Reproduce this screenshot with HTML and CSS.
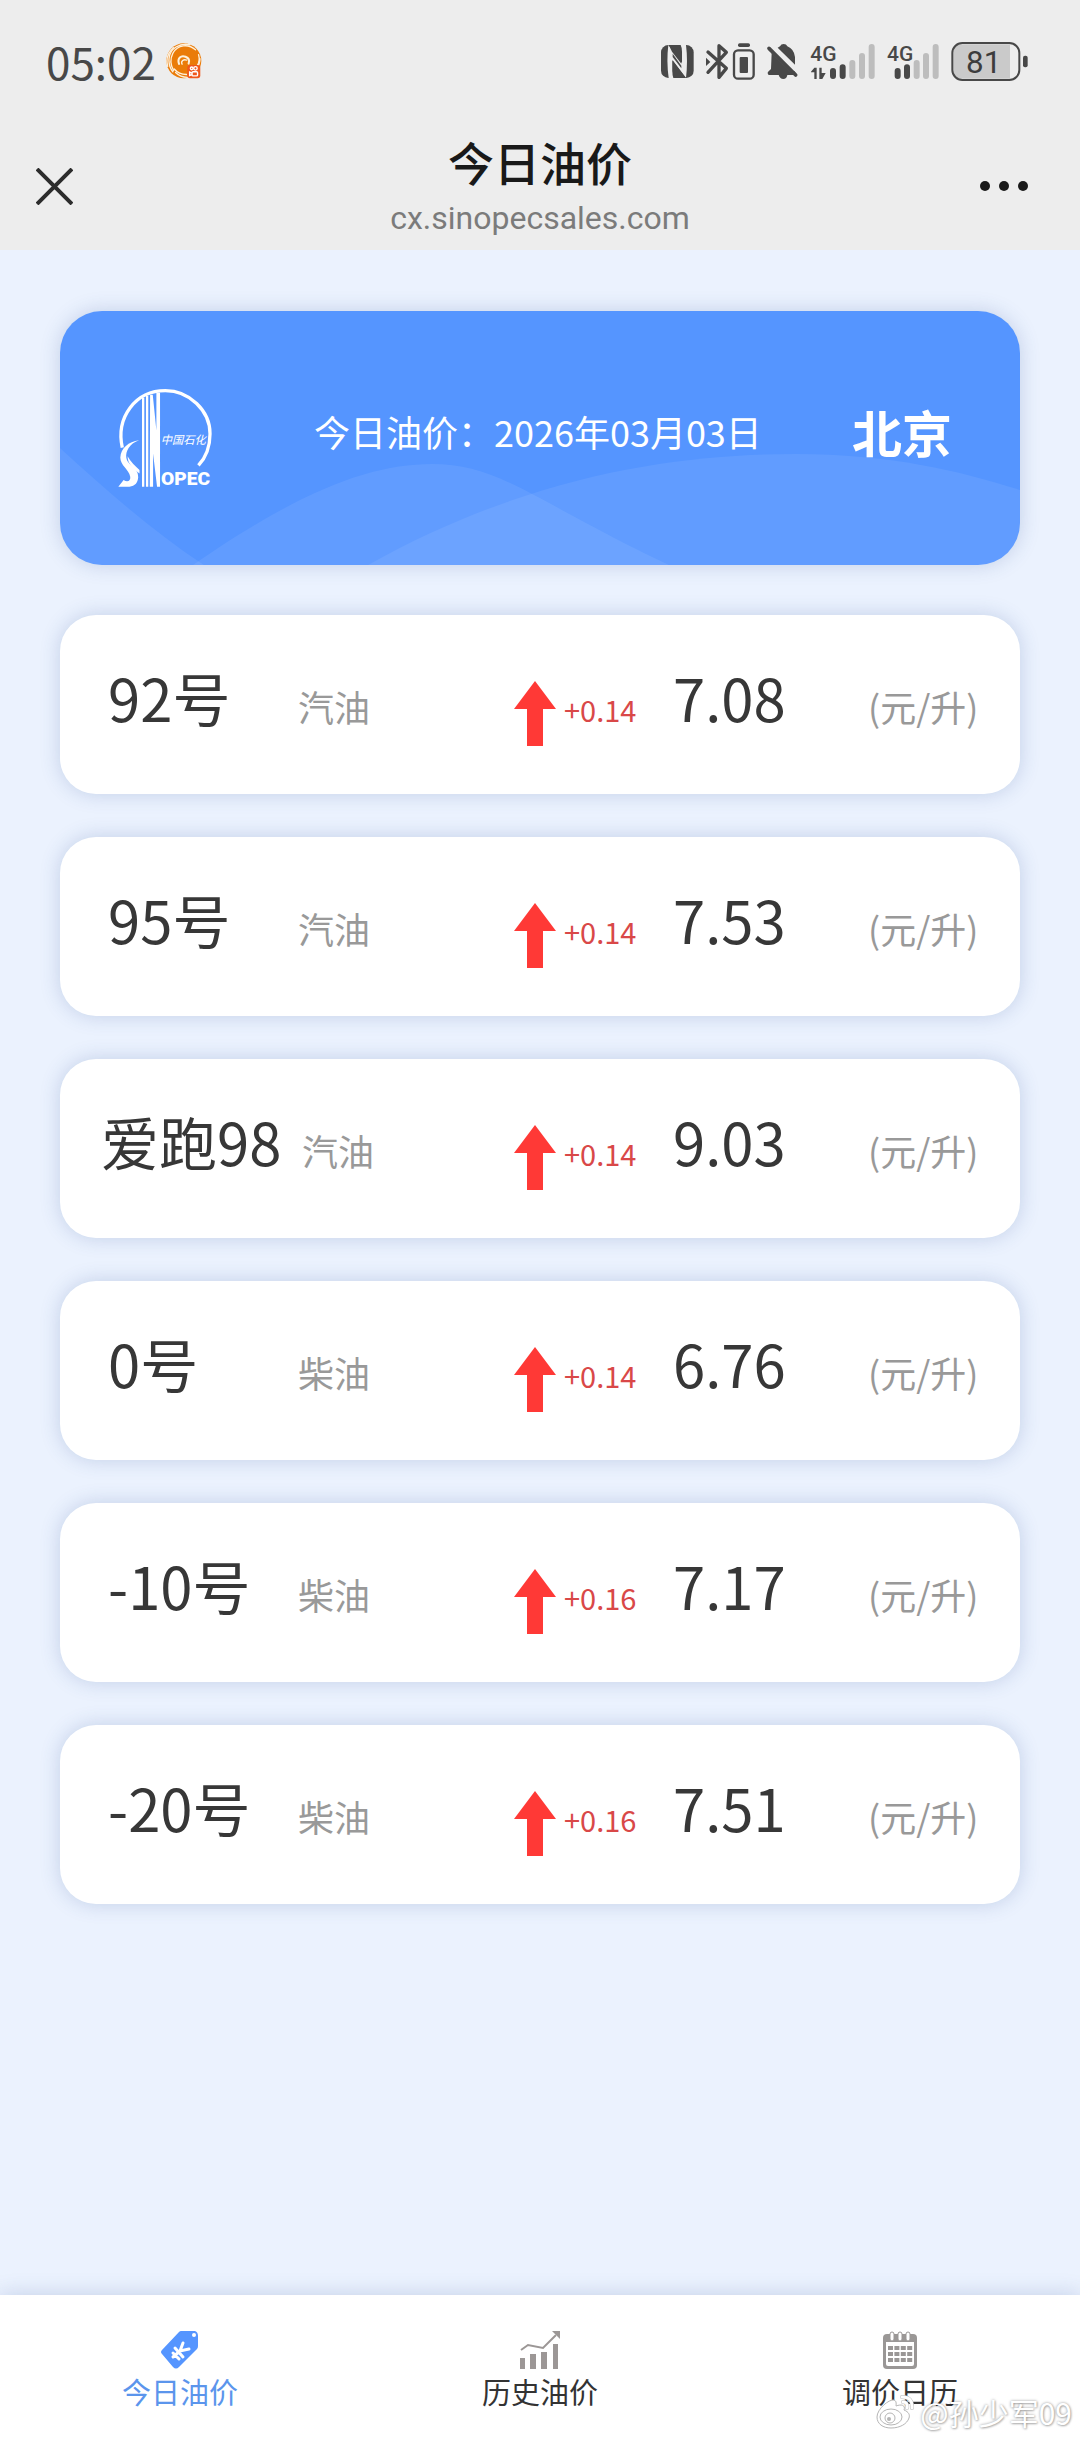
FILE: index.html
```html
<!DOCTYPE html>
<html lang="zh-CN">
<head>
<meta charset="utf-8">
<meta name="viewport" content="width=device-width, initial-scale=1">
<title>今日油价</title>
<link rel="stylesheet" href="styles.css">
</head>
<body>
<svg class="defs" width="0" height="0" aria-hidden="true">
  <symbol id="arrow-up" viewBox="0 0 42 65"><path d="M21 0 42 28H29V65H13V28H0Z" fill="#ff3936"/></symbol>
</svg>
<div class="page">
  <header class="top">
    <div class="status">
      <div class="status-left">
        <span class="time">05:02</span>
        <svg class="app-icon" viewBox="0 0 105 105" aria-hidden="true">
          <circle cx="52" cy="52" r="51" fill="#ea7b08"/>
          <g fill="none" stroke="#fdf0dc" stroke-width="4" stroke-linecap="round">
            <path d="M38 61C32 44 44 35 57 40 68 44 68 54 66 60" stroke-width="6"/>
            <path d="M47 62C42 52 52 47 60 50"/>
            <path d="M86 20C66 2 34 4 20 30 10 50 14 66 22 80"/>
            <path d="M70 5C40-1 12 16 9 44 7 62 12 74 20 84"/>
            <path d="M22 14C4 30 0 50 5 68"/>
            <path d="M95 34C102 60 88 76 68 78"/>
            <path d="M99 46C99 66 86 82 66 84"/>
            <path d="M28 86C38 96 52 101 66 100"/>
            <path d="M24 76C34 88 46 92 60 92"/>
          </g>
          <rect x="62" y="64" width="38" height="39" rx="8" fill="#f0571c"/>
          <g fill="none" stroke="#fff" stroke-width="4"><circle cx="75" cy="74" r="4"/><circle cx="86" cy="74" r="5"/><rect x="76" y="84" width="16" height="12" rx="3"/><path d="M76 88 69 85V95L76 92"/></g>
        </svg>
      </div>
      <svg class="status-icons" viewBox="33 33 1101 117" role="img" aria-label="NFC, 蓝牙, 静音, 4G, 电量 81">
        <g fill="#484848">
          <rect x="33" y="42" width="98" height="99" rx="22"/>
          <path d="M55 42 96 96V62Q96 50 92 42H108Q114 90 108 141L67 88V120Q67 134 70 141H56Q49 90 55 42Z" fill="#ededed"/>
          <path d="M57 42H84Q93 50 94 74V98L66 62Q60 50 57 42Z"/>
          <path d="M68 88 108 141H80Q70 136 68 120ZM68 68 94 104V112L68 78Z"/>
        </g>
        <g fill="none" stroke="#484848" stroke-width="10" stroke-linecap="round" stroke-linejoin="round">
          <path d="M174 63 229 112 207 139V44L229 64 174 124"/>
          <rect x="252" y="58" width="59" height="85" rx="12" stroke-width="7"/>
        </g>
        <g fill="#484848">
          <path d="M168 80 181 93 168 105Z"/>
          <rect x="264" y="37" width="36" height="11" rx="5"/>
          <rect x="269" y="78" width="25" height="48" rx="3"/>
          <path d="M383 50 390 46Q393 39 401 39 409 39 412 46 432 54 435 78V101ZM365 66 420 121H434L440 132H356Q350 126 356 121L363 114Z"/>
          <path d="M386 132H412Q410 144 400 144 390 144 386 132Z"/>
        </g>
        <path d="M357 52 437 132" stroke="#484848" stroke-width="11" stroke-linecap="round"/>
        <g class="net-label"><text x="481" y="90">4G</text><text x="711" y="90">4G</text></g>
        <path d="M483 122 493 110H500V144H493V124H483ZM508 110H515V126H527L517 144H508Z" fill="#484848"/>
        <g stroke-width="18" stroke-linecap="round">
          <path d="M549 120V135M578 109V135M743 120V135M771 109V135" stroke="#484848"/>
          <path d="M607 96V135M636 75V135M665 48V135M800 96V135M828 75V135M857 48V135" stroke="#bdbdbd"/>
        </g>
        <rect x="907" y="36" width="201" height="111" rx="30" fill="#ededed"/>
        <path d="M936 40H1080V143H936Q910 143 910 114V68Q910 40 936 40Z" fill="#cacaca"/>
        <rect x="907" y="36" width="201" height="111" rx="30" fill="none" stroke="#484848" stroke-width="6"/>
        <rect x="1119" y="74" width="14" height="35" rx="6" fill="#484848"/>
        <text class="battery-level" x="1001" y="127">81</text>
      </svg>
    </div>
    <div class="titlebar">
      <button class="icon-button" type="button" aria-label="关闭">
        <svg class="close" viewBox="0 0 37 37"><path d="M1 1 36 36M36 1 1 36" stroke="#2c2c2c" stroke-width="4"/></svg>
      </button>
      <div class="heading">
        <h1>今日油价</h1>
        <p>cx.sinopecsales.com</p>
      </div>
      <button class="icon-button" type="button" aria-label="更多">
        <svg class="more" viewBox="0 0 48 10"><g fill="#191919"><circle cx="5" cy="5" r="5"/><circle cx="24" cy="5" r="5"/><circle cx="43" cy="5" r="5"/></g></svg>
      </button>
    </div>
  </header>

  <main>
    <section class="hero">
      <svg class="waves" viewBox="0 0 960 254" preserveAspectRatio="none" aria-hidden="true">
        <g fill="#fff" fill-opacity=".07">
          <path d="M0 137C45 178 92 220 144 254H0Z"/>
          <path d="M133 254C240 180 310 153 372 153 440 153 474 190 609 254Z"/>
          <path d="M308 254C470 163 620 143 736 143 830 143 900 160 960 179V254Z"/>
        </g>
      </svg>
      <svg class="logo" viewBox="26 25 282 296" role="img" aria-label="中国石化 SINOPEC">
        <g fill="none" stroke="#fff">
          <path d="M38 202C18 110 78 30 168 30 240 30 303 90 303 160 303 202 290 232 268 256" stroke-width="10"/>
          <path d="M101 52V320M113 46V320" stroke-width="7"/>
        </g>
        <g fill="#fff">
          <path d="M122 42H130L141 150V36H152V320H143L131 220V320H121Z"/>
          <path d="M89 180C58 190 48 215 50 232 54 258 88 262 86 292 84 314 70 320 54 320H26L42 300C54 308 64 302 62 290 58 268 32 256 32 232 34 204 56 184 89 180Z"/>
          <path d="M54 228C62 244 78 258 90 270V280C72 266 54 252 54 228Z"/>
        </g>
        <text class="logo-script" x="154" y="190">中国石化</text>
        <text class="logo-name" x="155" y="316">OPEC</text>
      </svg>
      <p class="date">今日油价：2026年03月03日</p>
      <p class="city">北京</p>
    </section>

    <table class="prices">
      <tbody>
        <tr><th scope="row">92号</th><td class="kind">汽油</td><td class="trend"><svg viewBox="0 0 42 65" aria-label="上涨"><use href="#arrow-up"/></svg></td><td class="delta">+0.14</td><td class="price">7.08</td><td class="unit">(元/升)</td></tr>
        <tr><th scope="row">95号</th><td class="kind">汽油</td><td class="trend"><svg viewBox="0 0 42 65" aria-label="上涨"><use href="#arrow-up"/></svg></td><td class="delta">+0.14</td><td class="price">7.53</td><td class="unit">(元/升)</td></tr>
        <tr class="long-name"><th scope="row">爱跑98</th><td class="kind">汽油</td><td class="trend"><svg viewBox="0 0 42 65" aria-label="上涨"><use href="#arrow-up"/></svg></td><td class="delta">+0.14</td><td class="price">9.03</td><td class="unit">(元/升)</td></tr>
        <tr><th scope="row">0号</th><td class="kind">柴油</td><td class="trend"><svg viewBox="0 0 42 65" aria-label="上涨"><use href="#arrow-up"/></svg></td><td class="delta">+0.14</td><td class="price">6.76</td><td class="unit">(元/升)</td></tr>
        <tr><th scope="row">-10号</th><td class="kind">柴油</td><td class="trend"><svg viewBox="0 0 42 65" aria-label="上涨"><use href="#arrow-up"/></svg></td><td class="delta">+0.16</td><td class="price">7.17</td><td class="unit">(元/升)</td></tr>
        <tr><th scope="row">-20号</th><td class="kind">柴油</td><td class="trend"><svg viewBox="0 0 42 65" aria-label="上涨"><use href="#arrow-up"/></svg></td><td class="delta">+0.16</td><td class="price">7.51</td><td class="unit">(元/升)</td></tr>
      </tbody>
    </table>
  </main>

  <nav class="tabs">
    <a class="tab active" href="#today">
      <svg viewBox="0 0 38 38" aria-hidden="true">
        <path d="M18 1Q19 0 20 0H34Q37 1 37 5V15Q37 17 36 18L18 36Q15 39 12 36L1 23Q-1 21 1 19Z" fill="#5595ff"/>
        <circle cx="33" cy="4" r="2" fill="#fff"/>
        <path d="M22 12 19 20 28 18M19 20 12 26M14 17 22 26M12 22 18 28" fill="none" stroke="#fff" stroke-width="3" stroke-linecap="round"/>
      </svg>
      <span>今日油价</span>
    </a>
    <a class="tab" href="#history">
      <svg viewBox="0 0 42 38" aria-hidden="true">
        <path d="M1 27H6V38H1ZM11 23H17V38H11ZM22 21H28V38H22ZM34 13H39V38H34Z" fill="#9c9796"/>
        <path d="M2 19 9 14 24 17 37 4" fill="none" stroke="#9c9796" stroke-width="2"/>
        <path d="M33 0H41V8Z" fill="#9c9796"/>
      </svg>
      <span>历史油价</span>
    </a>
    <a class="tab" href="#calendar">
      <svg viewBox="0 0 34 38" aria-hidden="true">
        <path d="M4 3H30Q34 3 34 7V34Q34 38 30 38H4Q0 38 0 34V7Q0 3 4 3Z" fill="#9a9796"/>
        <path d="M3 11H31V33Q31 35 29 35H5Q3 35 3 33Z" fill="#fff"/>
        <g fill="#fff" stroke="#9a9796"><rect x="7" y="1" width="4" height="9" rx="2"/><rect x="15" y="1" width="4" height="9" rx="2"/><rect x="23" y="1" width="4" height="9" rx="2"/></g>
        <path d="M5 17H30M5 23H30M5 29H30" stroke="#9a9796" stroke-width="4" stroke-dasharray="5 1.4"/>
      </svg>
      <span>调价日历</span>
    </a>
  </nav>

  <div class="watermark">
    <svg viewBox="0 0 38 34" aria-hidden="true">
      <g fill="#fff" stroke="#b5b5b5" stroke-width="1">
        <path d="M1 22C1 14 13 4 18 5 21 6 20 10 20 11 25 9 30 10 28 15 33 17 34 20 33 23 31 29 24 33 15 33 7 33 1 29 1 22Z"/>
        <ellipse cx="15" cy="22" rx="11" ry="8"/>
        <circle cx="14" cy="23" r="5"/>
      </g>
      <circle cx="13" cy="24" r="2" fill="#b5b5b5"/>
      <g fill="none" stroke-linecap="round"><path d="M26 2Q37 2 36 13M27 7Q32 7 31 13" stroke="#bbb" stroke-width="4"/><path d="M26 2Q37 2 36 13M27 7Q32 7 31 13" stroke="#fff" stroke-width="3"/></g>
    </svg>
    <span>@孙少军09</span>
  </div>
</div>
</body>
</html>
```
FILE: styles.css
```css
* {
  box-sizing: border-box;
}

body,
h1,
p {
  margin: 0;
}

body {
  font-family: "Noto Sans CJK SC", "Noto Sans", sans-serif;
  font-weight: 400;
  color: #373737;
  background: #ebf2fe;
}

svg {
  display: block;
}

.defs {
  position: absolute;
}

.page {
  position: relative;
  display: flex;
  flex-direction: column;
  min-height: 100vh;
}

/* Header */
.top {
  background: #ededed;
}

.status {
  display: flex;
  justify-content: space-between;
  align-items: center;
  height: 122px;
  padding: 0 52px 0 46px;
}

.status-left {
  display: flex;
  align-items: center;
  gap: 10px;
}

.time {
  font-size: 44px;
  line-height: 60px;
  color: #484848;
}

.app-icon {
  width: 36px;
  height: 36px;
}

.status-icons {
  width: 367px;
  height: 39px;
}

.net-label {
  font-family: Roboto, sans-serif;
  font-size: 63px;
  font-weight: 500;
  fill: #484848;
}

.battery-level {
  font-family: Roboto, sans-serif;
  font-size: 94px;
  font-weight: 400;
  text-anchor: middle;
  fill: #3c3c3c;
}

.titlebar {
  display: grid;
  grid-template-columns: 64px 1fr 64px;
  align-items: center;
  height: 128px;
  padding: 0 36px;
}

.icon-button {
  height: 60px;
  padding: 0;
  border: 0;
  background: none;
}

.close {
  width: 37px;
  height: 37px;
}

.more {
  width: 48px;
  height: 10px;
}

.heading {
  padding-top: 4px;
  text-align: center;
}

.heading h1 {
  font-size: 46px;
  line-height: 60px;
  font-weight: 500;
  color: #191919;
}

.heading p {
  font-family: Roboto, sans-serif;
  font-size: 32px;
  line-height: 54px;
  color: #7b7b7b;
}

/* Content */
main {
  flex: 1;
  padding: 61px 60px;
}

.hero {
  position: relative;
  display: flex;
  padding: 78px 68px 78px 58px;
  margin-bottom: 50px;
  border-radius: 42px;
  background: #5595ff;
  color: #fff;
}

.hero,
.prices tr {
  box-shadow: 0 0 20px rgba(50, 80, 150, 0.22);
}

.waves {
  position: absolute;
  inset: 0;
  width: 100%;
  height: 100%;
  border-radius: 42px;
}

.logo {
  position: relative;
  width: 94px;
  height: 98px;
  overflow: visible;
}

.logo-script {
  font-size: 34px;
  font-style: italic;
  fill: #fff;
}

.logo-name {
  font-family: Roboto, sans-serif;
  font-size: 58px;
  font-weight: 900;
  fill: #fff;
}

.date,
.city {
  position: relative;
  line-height: 84px;
  white-space: nowrap;
}

.date {
  flex: 1;
  padding-left: 102px;
  font-size: 36px;
}

.city {
  font-size: 50px;
  font-weight: 700;
}

/* Price list */
.prices,
.prices tbody {
  display: flex;
  flex-direction: column;
  gap: 43px;
}

.prices tr {
  display: grid;
  grid-template-columns: 190px 1fr 50px 109px 195px 110px;
  align-items: baseline;
  padding: 42px 42px 45px 48px;
  border-radius: 36px;
  background: #fff;
}

.prices .long-name {
  grid-template-columns: 201px 1fr 50px 109px 195px 110px;
  padding-left: 41px;
}

.prices th,
.prices td {
  padding: 0;
  text-align: left;
  font-weight: 400;
  line-height: 80px;
  white-space: nowrap;
}

.prices th,
.prices .price {
  font-size: 58px;
}

.prices .kind,
.prices .unit {
  font-size: 36px;
  color: #999;
}

.prices .trend {
  align-self: start;
  padding-top: 24px;
}

.trend svg {
  width: 42px;
  height: 65px;
}

.prices .delta {
  font-size: 29px;
  color: #d94848;
}

/* Bottom tabs */
.tabs {
  display: grid;
  grid-template-columns: repeat(3, 1fr);
  height: 145px;
  padding-top: 36px;
  background: #fff;
  box-shadow: 0 0 20px rgba(50, 80, 150, 0.22);
}

.tab {
  display: flex;
  flex-direction: column;
  align-items: center;
  gap: 2px;
  font-size: 29px;
  line-height: 40px;
  color: #333;
  text-decoration: none;
}

.tab svg {
  height: 38px;
}

.tab.active {
  color: #5b95ec;
}

.watermark {
  position: absolute;
  right: 8px;
  bottom: 8px;
  display: flex;
  align-items: center;
  gap: 6px;
  font-size: 30px;
  line-height: 40px;
  color: #fff;
  text-shadow: 0 0 3px rgba(0, 0, 0, 0.4), 1px 1px 2px rgba(0, 0, 0, 0.2);
}

.watermark svg {
  width: 38px;
  height: 34px;
}
```
